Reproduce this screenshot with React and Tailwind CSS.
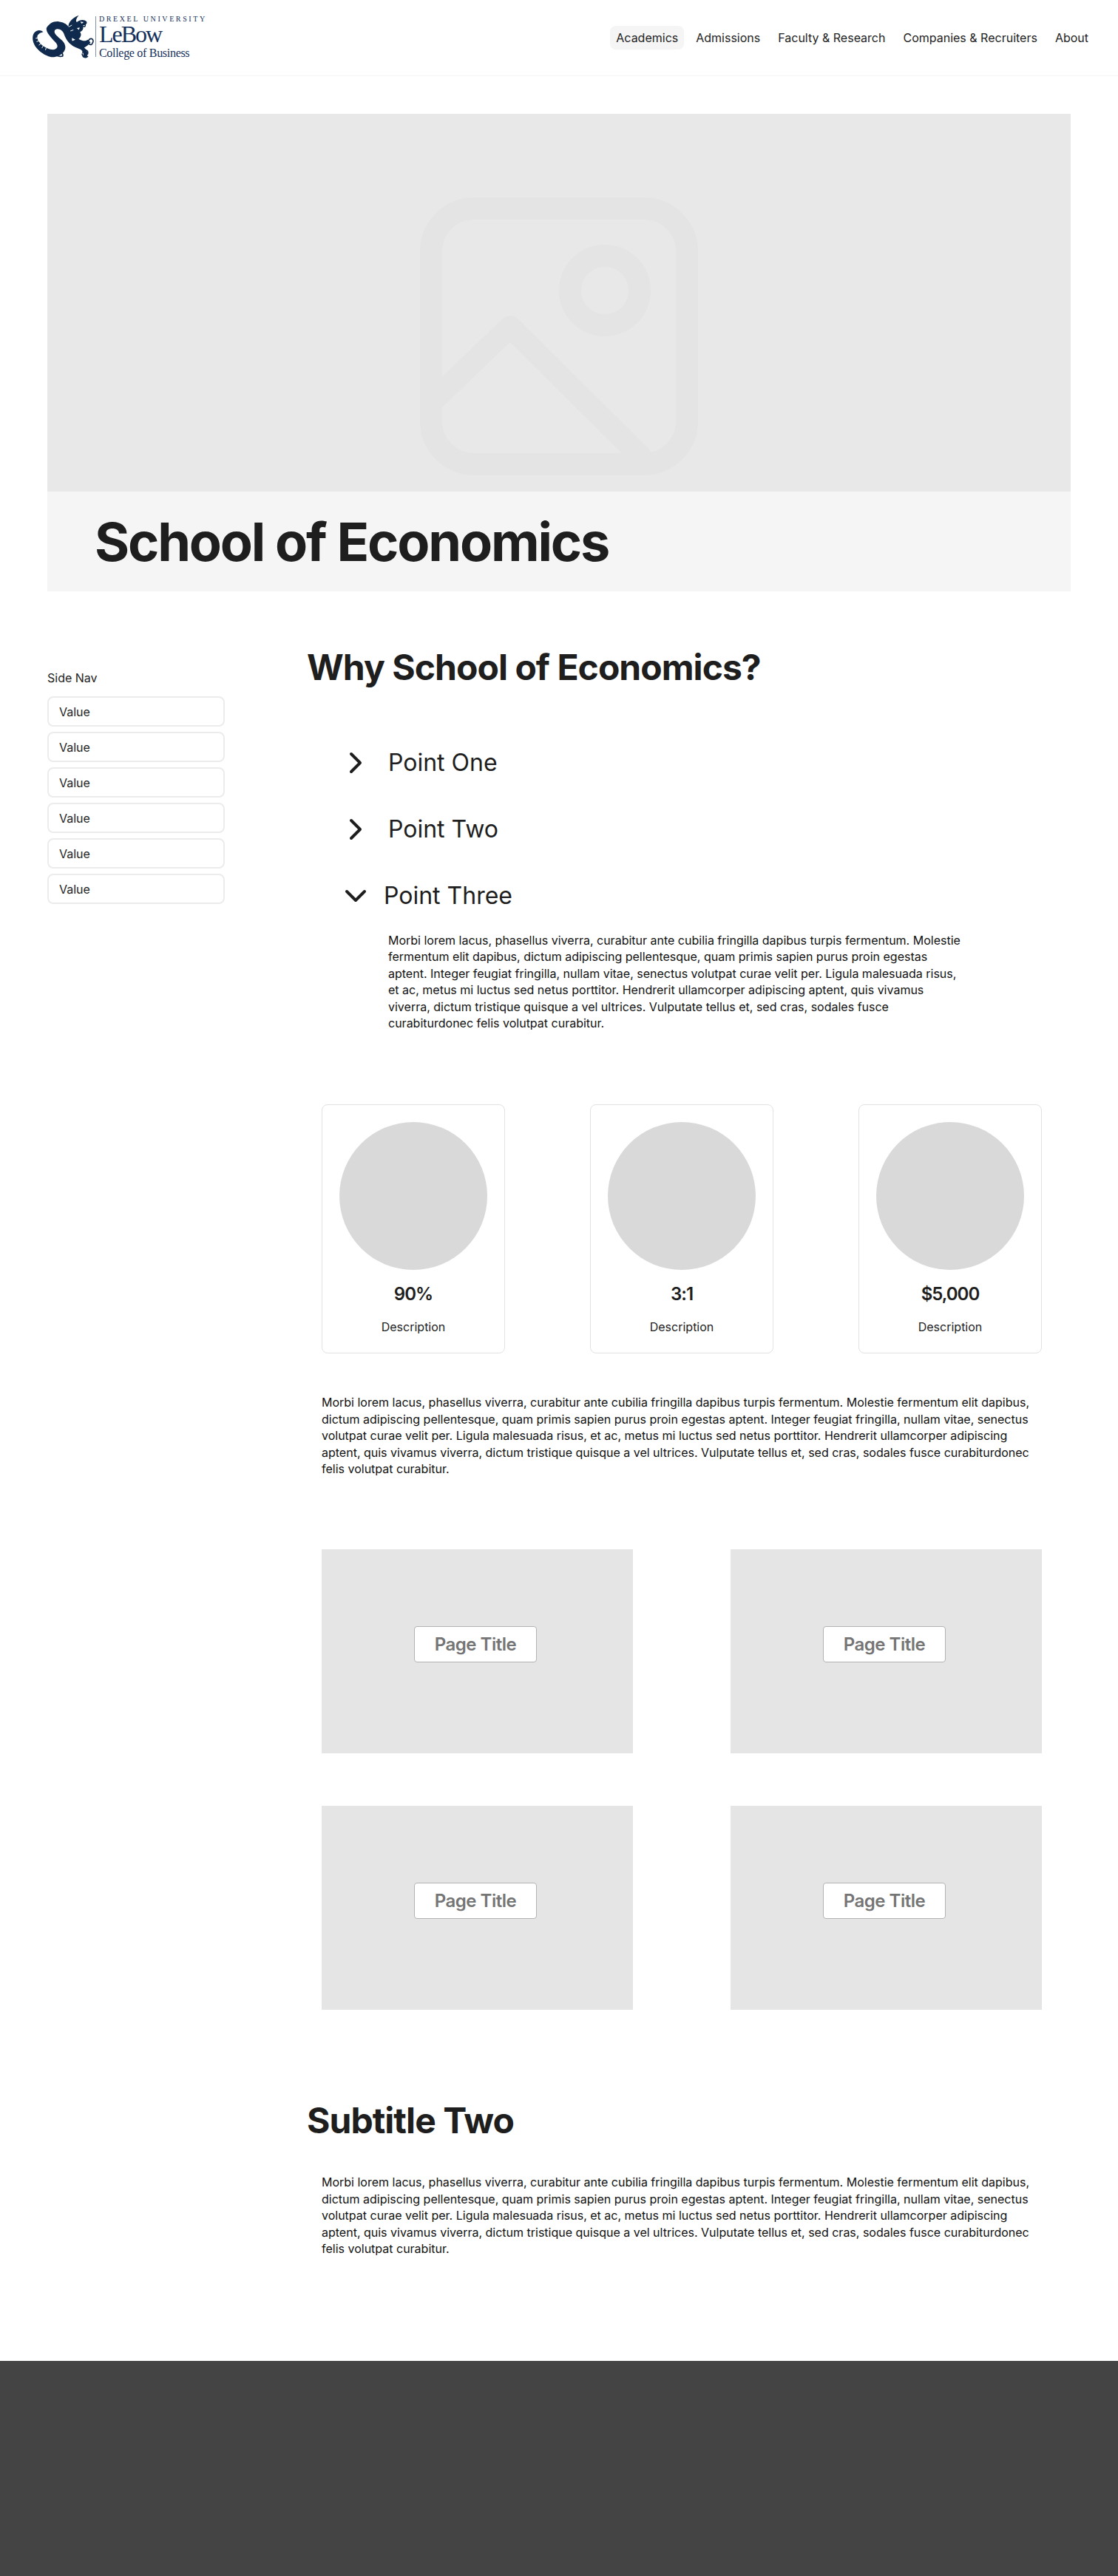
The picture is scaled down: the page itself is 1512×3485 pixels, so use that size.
import React from "react";
import { ChevronRight, ChevronDown } from "lucide-react";

const LOREM = "Morbi lorem lacus, phasellus viverra, curabitur ante cubilia fringilla dapibus turpis fermentum. Molestie fermentum elit dapibus, dictum adipiscing pellentesque, quam primis sapien purus proin egestas aptent. Integer feugiat fringilla, nullam vitae, senectus volutpat curae velit per. Ligula malesuada risus, et ac, metus mi luctus sed netus porttitor. Hendrerit ullamcorper adipiscing aptent, quis vivamus viverra, dictum tristique quisque a vel ultrices. Vulputate tellus et, sed cras, sodales fusce curabiturdonec felis volutpat curabitur.";

function Logo() {
  return (
    <div className="ml-10 flex items-start self-start pt-[21px]">
      <svg width="90" height="63" viewBox="0 0 270 190" className="mt-[-3px]">
        <path fill="#0f2a4d" d="M55 76 C38 62 14 72 12 98 C10 130 40 165 85 178 C105 181 125 172 138 158 C152 142 145 120 125 105 C110 92 95 80 103 68 C115 58 135 68 140 85 C148 108 160 125 185 138 L208 148 C218 156 222 168 218 180 L232 178 C240 165 234 150 222 140 C232 134 240 128 248 118 L236 108 C226 116 214 112 205 108 C190 100 176 90 170 80 L158 55 C150 42 135 36 115 33 C95 32 78 42 68 60 C66 78 88 100 105 118 C116 130 116 142 100 148 C85 150 60 140 45 125 C33 112 28 100 32 90 C36 82 46 78 55 76 Z" />
        <path fill="#0f2a4d" d="M160 65 C152 45 165 22 200 8 C190 20 186 30 192 36 C204 26 222 24 232 34 C236 44 226 48 214 50 C222 58 218 72 205 76 C214 88 206 100 196 108 L170 85 Z" />
        <g fill="none" stroke="#0f2a4d" strokeWidth="5" strokeLinecap="round">
          <path d="M238 118 C242 98 262 100 258 118" />
          <path d="M240 122 C246 132 256 128 256 120" />
          <path d="M216 160 C222 142 240 150 236 166" />
          <path d="M214 166 C216 180 230 184 236 176" />
          <path d="M112 168 C122 155 138 162 134 174" />
          <path d="M108 172 C118 176 126 178 134 174" />
          <path d="M214 50 C224 58 228 54 226 46" />
        </g>
        <path fill="#ffffff" d="M206 34 L220 36 L212 42 Z M172 100 L186 108 L173 113 Z M192 60 L204 58 L200 68 Z" />
        <g stroke="#ffffff" strokeWidth="3">
          <path d="M24 102 L34 100 M28 116 L38 112 M37 130 L45 124 M49 142 L55 133 M64 150 L67 141" />
          <path d="M150 42 L160 32 M160 55 L172 48 M166 72 L178 68" />
        </g>
      </svg>
      <div className="mt-px ml-[-1px] h-[55px] w-px bg-[#8493a8]" />
      <div className="ml-[4px] flex flex-col text-[#14305a] [font-family:'Liberation_Serif',serif]">
        <div className="text-[10px] leading-[10px] tracking-[2.6px] whitespace-nowrap">DREXEL UNIVERSITY</div>
        <div className="text-[32px] leading-[30px] tracking-[-2px]">LeBow</div>
        <div className="mt-[2px] text-[16px] leading-[17px] tracking-[-0.3px] whitespace-nowrap">College of Business</div>
      </div>
    </div>
  );
}

function Nav() {
  const items = ["Academics", "Admissions", "Faculty & Research", "Companies & Recruiters", "About"];
  return (
    <nav className="flex items-center gap-2">
      {items.map((t, i) => (
        <a key={t} className={"rounded-lg p-2 text-base leading-none text-[#1e1e1e] " + (i === 0 ? "bg-[#f5f5f5]" : "")}>{t}</a>
      ))}
    </nav>
  );
}

function Stat({ value }) {
  return (
    <div className="flex h-[337px] w-[248px] flex-col items-center rounded-lg border border-[#e2e2e2] pt-[23px]">
      <div className="size-[200px] rounded-full bg-[#d9d9d9]" />
      <div className="mt-[15px] text-2xl leading-[36px] font-semibold tracking-[-1px] text-[#1e1e1e]">{value}</div>
      <div className="mt-[15px] text-base leading-[22px] text-[#1e1e1e]">Description</div>
    </div>
  );
}

function Tile() {
  return (
    <div className="flex h-[276px] w-[421px] items-center justify-center bg-[#e5e5e5] pr-[5px] pb-[19px]">
      <div className="flex h-[49px] w-[166px] items-center justify-center rounded border border-[#b3b3b3] bg-white text-2xl font-semibold tracking-[-0.48px] text-[#757575]">Page Title</div>
    </div>
  );
}

function Point({ children, open }) {
  return (
    <div className="flex h-[90px] items-center pl-[42px]">
      {open ? <ChevronDown className="size-12 text-[#1e1e1e]" strokeWidth={2} /> : <ChevronRight className="size-12 text-[#1e1e1e]" strokeWidth={2} />}
      <span className={"text-[32px] leading-none text-[#1e1e1e] " + (open ? "ml-[14px]" : "ml-[20px]")}>{children}</span>
    </div>
  );
}

export default function App() {
  return (
    <div className="flex min-h-[3485px] flex-col bg-white font-['Inter',sans-serif]">
      <header className="flex h-[103px] items-center justify-between border-b border-[#f5f5f5] pr-[32px]">
        <Logo />
        <Nav />
      </header>

      <section className="mx-16 mt-[51px]">
        <div className="flex h-[511px] items-end justify-center bg-[#e8e8e8] pb-[10px]">
          <svg width="400" height="400" viewBox="0 0 400 400" fill="none" stroke="#e4e4e4" strokeWidth="30" strokeLinecap="round" strokeLinejoin="round">
            <rect x="27" y="27" width="346" height="346" rx="58" />
            <circle cx="262" cy="138" r="47" />
            <path d="M32 285 L134 187 L310 362" />
          </svg>
        </div>
        <div className="flex h-[135px] items-center bg-[#f5f5f5] pl-16">
          <h1 className="text-[72px] leading-none font-bold tracking-[-2.16px] text-[#1e1e1e]">School of Economics</h1>
        </div>
      </section>

      <div className="mt-[74px] flex pl-16">
        <aside className="w-[240px] shrink-0 pt-[32px]">
          <div className="text-base leading-[22px] text-[#1e1e1e]">Side Nav</div>
          <div className="mt-[14px] flex flex-col gap-[7px]">
            {[0, 1, 2, 3, 4, 5].map((i) => (
              <div key={i} className="flex h-[41px] items-center rounded-lg border-2 border-[#ececec] px-[14px] text-base text-[#1e1e1e]">Value</div>
            ))}
          </div>
        </aside>

        <main className="ml-[111px] w-[1020px]">
          <h2 className="text-5xl leading-[58px] font-bold tracking-[-0.96px] text-[#1e1e1e]">Why School of Economics?</h2>

          <div className="mt-[55px]">
            <Point>Point One</Point>
            <Point>Point Two</Point>
            <Point open>Point Three</Point>
          </div>
          <p className="mt-[4px] ml-[110px] w-[780px] text-base leading-[22.4px] text-[#111111]">{LOREM}</p>

          <div className="mt-[99px] ml-5 flex w-[974px] justify-between">
            <Stat value="90%" />
            <Stat value="3:1" />
            <Stat value="$5,000" />
          </div>

          <p className="mt-[55px] ml-5 w-[975px] text-base leading-[22.4px] text-[#111111]">{LOREM}</p>

          <div className="mt-[98px] ml-5 grid w-[974px] grid-cols-[421px_421px] justify-between gap-y-[71px]">
            <Tile />
            <Tile />
            <Tile />
            <Tile />
          </div>

          <h2 className="mt-[121px] text-5xl leading-[58px] font-bold tracking-[-0.96px] text-[#1e1e1e]">Subtitle Two</h2>
          <p className="mt-[43px] ml-5 w-[975px] text-base leading-[22.4px] text-[#111111]">{LOREM}</p>
        </main>
      </div>

      <footer className="mt-auto h-[291px] bg-[#444444]" />
    </div>
  );
}
